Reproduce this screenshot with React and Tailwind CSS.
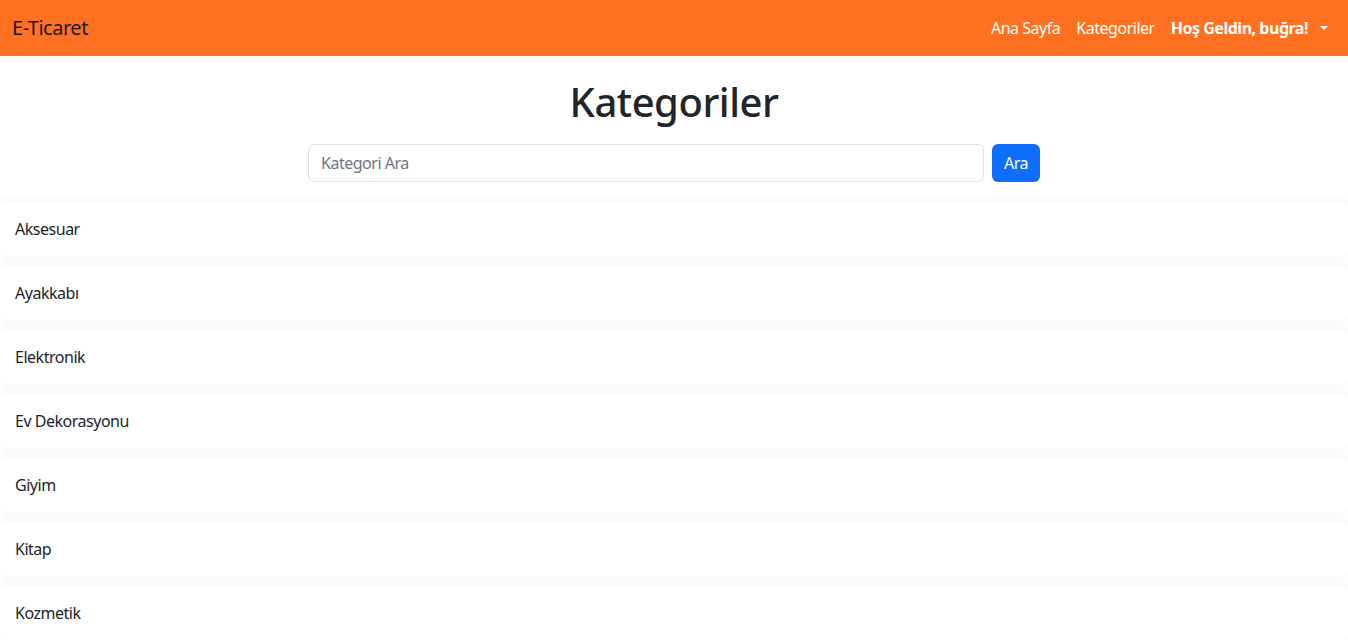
import { useState } from "react";

const categories = [
  "Aksesuar",
  "Ayakkabı",
  "Elektronik",
  "Ev Dekorasyonu",
  "Giyim",
  "Kitap",
  "Kozmetik",
];

function App() {
  const [query, setQuery] = useState("");

  return (
    <div className="min-h-screen bg-white text-[#212529] font-['Noto_Sans',sans-serif] tracking-[-0.03em]">
      <nav className="h-14 bg-[#ff7021] flex items-center justify-between px-3">
        <span className="text-xl text-[#1a1a1a]">E-Ticaret</span>
        <div className="flex items-center gap-4 text-white text-base mr-2">
          <span>Ana Sayfa</span>
          <span>Kategoriler</span>
          <span className="flex items-center gap-2 font-bold">
            Hoş Geldin, buğra!
            <span className="w-0 h-0 border-x-[4px] border-x-transparent border-t-[4px] border-t-white ml-1" />
          </span>
        </div>
      </nav>

      <h1 className="text-[40px] leading-[48px] font-medium text-center mt-[22px] mb-[18px]">
        Kategoriler
      </h1>

      <div className="flex gap-2 w-[732px] mx-auto">
        <input
          value={query}
          onChange={(e) => setQuery(e.target.value)}
          placeholder="Kategori Ara"
          className="flex-1 h-[38px] border border-[#dee2e6] rounded-md px-3 text-base placeholder:text-[#6c757d] outline-none"
        />
        <button className="h-[38px] px-3 bg-[#0d6efd] text-white rounded-md text-base">
          Ara
        </button>
      </div>

      <div className="mt-5 flex flex-col gap-[10px]">
        {categories
          .filter((c) => c.toLowerCase().includes(query.toLowerCase()))
          .map((c) => (
            <div
              key={c}
              className="bg-white rounded-md shadow-[0_0_10px_rgba(0,0,0,0.07)] px-[15px] py-[15px] leading-6"
            >
              {c}
            </div>
          ))}
      </div>
    </div>
  );
}

export default App;
